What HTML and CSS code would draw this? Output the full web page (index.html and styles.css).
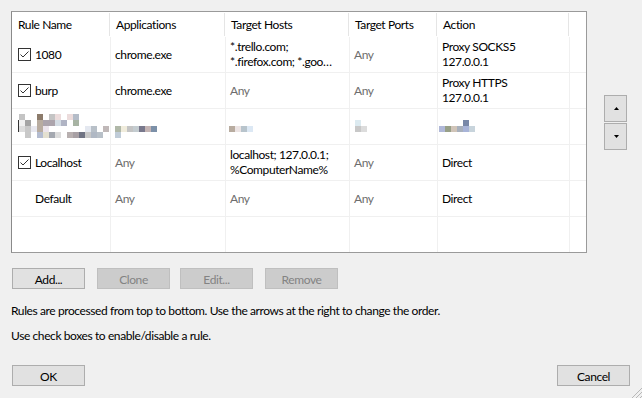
FILE: index.html
```html
<!DOCTYPE html>
<html>
<head>
<meta charset="utf-8">
<title>Proxification Rules</title>
<link rel="stylesheet" href="styles.css">
</head>
<body>
<div class="dialog">
  <div class="top">
    <div class="list">
      <div class="row head">
        <div class="cell c1">Rule Name</div>
        <div class="cell c2">Applications</div>
        <div class="cell c3">Target Hosts</div>
        <div class="cell c4">Target Ports</div>
        <div class="cell c5">Action</div>
        <div class="cell c6"></div>
      </div>
      <div class="row">
        <div class="cell c1"><span class="check"><svg width="13" height="13" viewBox="0 0 13 13"><rect x="0.5" y="0.5" width="12" height="12" fill="#fff" stroke="#333"/><polyline points="2.5,6.5 5,9 10.5,3.5" fill="none" stroke="#333" stroke-width="1"/></svg></span>1080</div>
        <div class="cell c2">chrome.exe</div>
        <div class="cell c3"><div class="lines"><span>*.trello.com;</span><span>*.firefox.com; *.goo…</span></div></div>
        <div class="cell c4 muted">Any</div>
        <div class="cell c5"><div class="lines"><span>Proxy SOCKS5</span><span>127.0.0.1</span></div></div>
        <div class="cell c6"></div>
      </div>
      <div class="row">
        <div class="cell c1"><span class="check"><svg width="13" height="13" viewBox="0 0 13 13"><rect x="0.5" y="0.5" width="12" height="12" fill="#fff" stroke="#333"/><polyline points="2.5,6.5 5,9 10.5,3.5" fill="none" stroke="#333" stroke-width="1"/></svg></span>burp</div>
        <div class="cell c2">chrome.exe</div>
        <div class="cell c3 muted">Any</div>
        <div class="cell c4 muted">Any</div>
        <div class="cell c5"><div class="lines"><span>Proxy HTTPS</span><span>127.0.0.1</span></div></div>
        <div class="cell c6"></div>
      </div>
      <div class="row blur">
        <div class="cell c1 m1"><span class="bar"></span>
          <div class="mosaic w15">
            <i class="k1"></i><i></i><i></i><i class="k2"></i><i></i><i class="k1"></i><i class="k3"></i><i></i><i class="k3"></i><i class="k4"></i><i></i><i></i><i></i><i></i><i></i>
            <i class="k5"></i><i class="k6"></i><i></i><i class="k7"></i><i class="k8"></i><i class="k8"></i><i class="k9"></i><i class="k10"></i><i></i><i class="k11"></i><i></i><i></i><i></i><i></i><i></i>
            <i class="k12"></i><i class="k13"></i><i class="k14"></i><i class="k7"></i><i class="k15"></i><i></i><i></i><i></i><i></i><i></i><i></i><i class="k16"></i><i class="k17"></i><i></i><i class="k18"></i>
            <i></i><i class="k13"></i><i></i><i class="k19"></i><i class="k20"></i><i class="k21"></i><i class="k12"></i><i></i><i class="k22"></i><i class="k23"></i><i class="k24"></i><i class="k13"></i><i class="k25"></i><i class="k17"></i><i></i>
          </div>
        </div>
        <div class="cell c2 m2">
          <div class="mosaic w7">
            <i></i><i></i><i></i><i></i><i></i><i></i><i></i>
            <i></i><i></i><i></i><i></i><i></i><i></i><i></i>
            <i class="k26"></i><i class="k27"></i><i class="k1"></i><i class="k28"></i><i class="k29"></i><i class="k30"></i><i class="k31"></i>
            <i class="k32"></i><i></i><i></i><i></i><i></i><i></i><i></i>
          </div>
        </div>
        <div class="cell c3 m3">
          <div class="mosaic w4">
            <i></i><i></i><i></i><i></i>
            <i></i><i></i><i></i><i></i>
            <i class="k7"></i><i class="k42"></i><i class="k43"></i><i class="k33"></i>
          </div>
        </div>
        <div class="cell c4 m4">
          <div class="mosaic w2">
            <i></i><i></i>
            <i class="k34"></i><i></i>
            <i class="k13"></i><i class="k12"></i>
          </div>
        </div>
        <div class="cell c5 m5">
          <div class="mosaic w6">
            <i></i><i></i><i></i><i></i><i></i><i></i>
            <i></i><i></i><i></i><i></i><i class="k35"></i><i></i>
            <i class="k36"></i><i class="k37"></i><i class="k38"></i><i class="k39"></i><i class="k40"></i><i class="k41"></i>
          </div>
        </div>
        <div class="cell c6"></div>
      </div>
      <div class="row">
        <div class="cell c1"><span class="check"><svg width="13" height="13" viewBox="0 0 13 13"><rect x="0.5" y="0.5" width="12" height="12" fill="#fff" stroke="#333"/><polyline points="2.5,6.5 5,9 10.5,3.5" fill="none" stroke="#333" stroke-width="1"/></svg></span>Localhost</div>
        <div class="cell c2 muted">Any</div>
        <div class="cell c3"><div class="lines"><span>localhost; 127.0.0.1;</span><span>%ComputerName%</span></div></div>
        <div class="cell c4 muted">Any</div>
        <div class="cell c5">Direct</div>
        <div class="cell c6"></div>
      </div>
      <div class="row">
        <div class="cell c1"><span class="check blank"></span>Default</div>
        <div class="cell c2 muted">Any</div>
        <div class="cell c3 muted">Any</div>
        <div class="cell c4 muted">Any</div>
        <div class="cell c5">Direct</div>
        <div class="cell c6"></div>
      </div>
      <div class="row filler">
        <div class="cell c1"></div>
        <div class="cell c2"></div>
        <div class="cell c3"></div>
        <div class="cell c4"></div>
        <div class="cell c5"></div>
        <div class="cell c6"></div>
      </div>
    </div>
    <div class="arrows">
      <button class="btn arrow"><svg width="5" height="3" viewBox="0 0 5 3"><polygon points="2.5,0 5,3 0,3" fill="#000"/></svg></button>
      <button class="btn arrow"><svg width="5" height="3" viewBox="0 0 5 3"><polygon points="0,0 5,0 2.5,3" fill="#000"/></svg></button>
    </div>
  </div>
  <div class="actions">
    <button class="btn">Add...</button>
    <button class="btn disabled clone">Clone</button>
    <button class="btn disabled edit">Edit...</button>
    <button class="btn disabled remove">Remove</button>
  </div>
  <p class="hint first">Rules are processed from top to bottom. Use the arrows at the right to change the order.</p>
  <p class="hint second">Use check boxes to enable/disable a rule.</p>
  <div class="footer">
    <button class="btn">OK</button>
    <button class="btn">Cancel</button>
  </div>
  <svg class="grip" width="11" height="11" viewBox="0 0 11 11"><line x1="11" y1="1" x2="1" y2="11" stroke="#b8b8b8"/><line x1="11" y1="5" x2="5" y2="11" stroke="#b8b8b8"/><line x1="11" y1="9" x2="9" y2="11" stroke="#b8b8b8"/></svg>
</div>
</body>
</html>
```
FILE: styles.css
```css
* { box-sizing: border-box; }
html, body { margin: 0; padding: 0; }
body {
  background: #f0f0f0;
  font-family: Lato, "Liberation Sans", sans-serif;
  font-size: 12px;
  letter-spacing: -0.4px;
  color: #000;
}
.dialog {
  position: relative;
  width: 642px;
  height: 398px;
  padding: 11px 0 0 11px;
  overflow: hidden;
}
.top { display: flex; align-items: flex-start; }
.list {
  width: 576px;
  height: 242px;
  border: 1px solid #9a9a9a;
  border-left-color: #8a8a8a;
  background: #fff;
  display: flex;
  flex-direction: column;
}
.row { display: flex; height: 36px; flex: none; }
.row.head { height: 25px; }
.row.filler { flex: 1; height: auto; }
.cell {
  display: flex;
  align-items: center;
  line-height: 13px;
  padding-left: 4px;
  border-right: 1px solid #f0f0f0;
  border-bottom: 1px solid #f0f0f0;
  white-space: nowrap;
  overflow: hidden;
}
.lines { display: flex; flex-direction: column; }
.lines span { display: block; line-height: 14.5px; }
.filler .cell { border-bottom: none; }
.c1 { width: 99px; padding-left: 6px; }
.c2 { width: 115px; }
.c3 { width: 124px; }
.c4 { width: 88px; }
.c5 { width: 132px; }
.c6 { width: 16px; border-right: none; }
.head .cell {
  border: none;
  padding-left: 5px;
  background: linear-gradient(#e5e5e5, #e5e5e5) no-repeat right 1px top 1px / 1px 23px;
}
.head .c1 { padding-left: 6px; }
.head .c6 { background: none; }
.muted { color: #6d6d6d; }
.check { width: 13px; height: 13px; margin-right: 4px; flex: none; display: block; }
.check svg { display: block; }

.blur .cell { align-items: flex-start; padding-top: 5px; }
.blur .m1 { padding-left: 6px; }
.blur .m2 { padding-left: 4px; }
.blur .m3 { padding-left: 3px; }
.blur .m4 { padding-left: 5px; }
.blur .m5 { padding-left: 1px; }
.bar { width: 1px; height: 12px; margin-top: 6px; background: #333; flex: none; }
.mosaic { display: grid; grid-auto-rows: 6px; flex: none; }
.mosaic.w15 { grid-template-columns: repeat(15, 6px); }
.mosaic.w7 { grid-template-columns: repeat(7, 6px); }
.mosaic.w6 { grid-template-columns: repeat(6, 6px); }
.mosaic.w4 { grid-template-columns: repeat(4, 6px); }
.mosaic.w2 { grid-template-columns: repeat(2, 6px); }
.mosaic i { display: block; }
.k1 { background: #c4c4c4; } .k2 { background: #8c7b6b; } .k3 { background: #ecdcdc; }
.k4 { background: #b4bcc8; } .k5 { background: #f0f0f0; } .k6 { background: #a4a4a4; }
.k7 { background: #b8aca0; } .k8 { background: #aca4ac; } .k9 { background: #d4dce4; }
.k10 { background: #b0b4c4; } .k11 { background: #a8b4a4; } .k12 { background: #dcdcdc; }
.k13 { background: #c8c8c8; } .k14 { background: #e8e8f0; } .k15 { background: #ece4ec; }
.k16 { background: #e4e8f0; } .k17 { background: #b8c0c8; } .k18 { background: #c0b8b8; }
.k19 { background: #b4bcd0; } .k20 { background: #e4e0d0; } .k21 { background: #a4a8b0; }
.k22 { background: #b8b0b0; } .k23 { background: #a8a0a4; } .k24 { background: #707484; }
.k25 { background: #b0b8c4; } .k26 { background: #b0b8a8; } .k27 { background: #f0ecdc; }
.k28 { background: #c4ccd0; } .k29 { background: #78788c; } .k30 { background: #c4b4b4; }
.k31 { background: #7c90a8; } .k32 { background: #c0ccd8; } .k33 { background: #dce8f4; }
.k34 { background: #dceaf0; } .k35 { background: #7888a8; } .k36 { background: #b0b8d8; }
.k37 { background: #98a088; } .k38 { background: #d0c4b8; } .k39 { background: #a8b0bc; }
.k40 { background: #a8b4d8; } .k41 { background: #c8d4dc; } .k42 { background: #ece4e4; }
.k43 { background: #b8c4cc; }

.arrows {
  display: flex;
  flex-direction: column;
  gap: 1px;
  margin: 84px 0 0 17px;
}
.btn {
  font: inherit;
  letter-spacing: inherit;
  color: #000;
  width: 73px;
  height: 21px;
  padding: 1px 0 0;
  line-height: 19px;
  background: #e1e1e1;
  border: 1px solid #adadad;
  border-radius: 0;
  text-align: center;
  margin: 0;
}
.btn.arrow {
  width: 23px;
  height: 27px;
  padding: 0 0 0 2px;
  display: flex;
  align-items: center;
  justify-content: center;
}
.btn.arrow svg { display: block; }
.btn.disabled { background: #cccccc; border-color: #bfbfbf; color: #838383; }
.actions { display: flex; margin-top: 15px; padding-left: 1px; }
.actions .clone { margin-left: 12px; }
.actions .edit { margin-left: 10px; }
.actions .remove { margin-left: 12px; }
.hint { margin: 0; line-height: 16px; }
.hint.first { margin-top: 14px; }
.hint.second { margin-top: 9px; }
.footer {
  display: flex;
  justify-content: space-between;
  margin-top: 21px;
  padding: 0 12px 0 1px;
}
.grip { position: absolute; right: 0; bottom: 0; }
```
